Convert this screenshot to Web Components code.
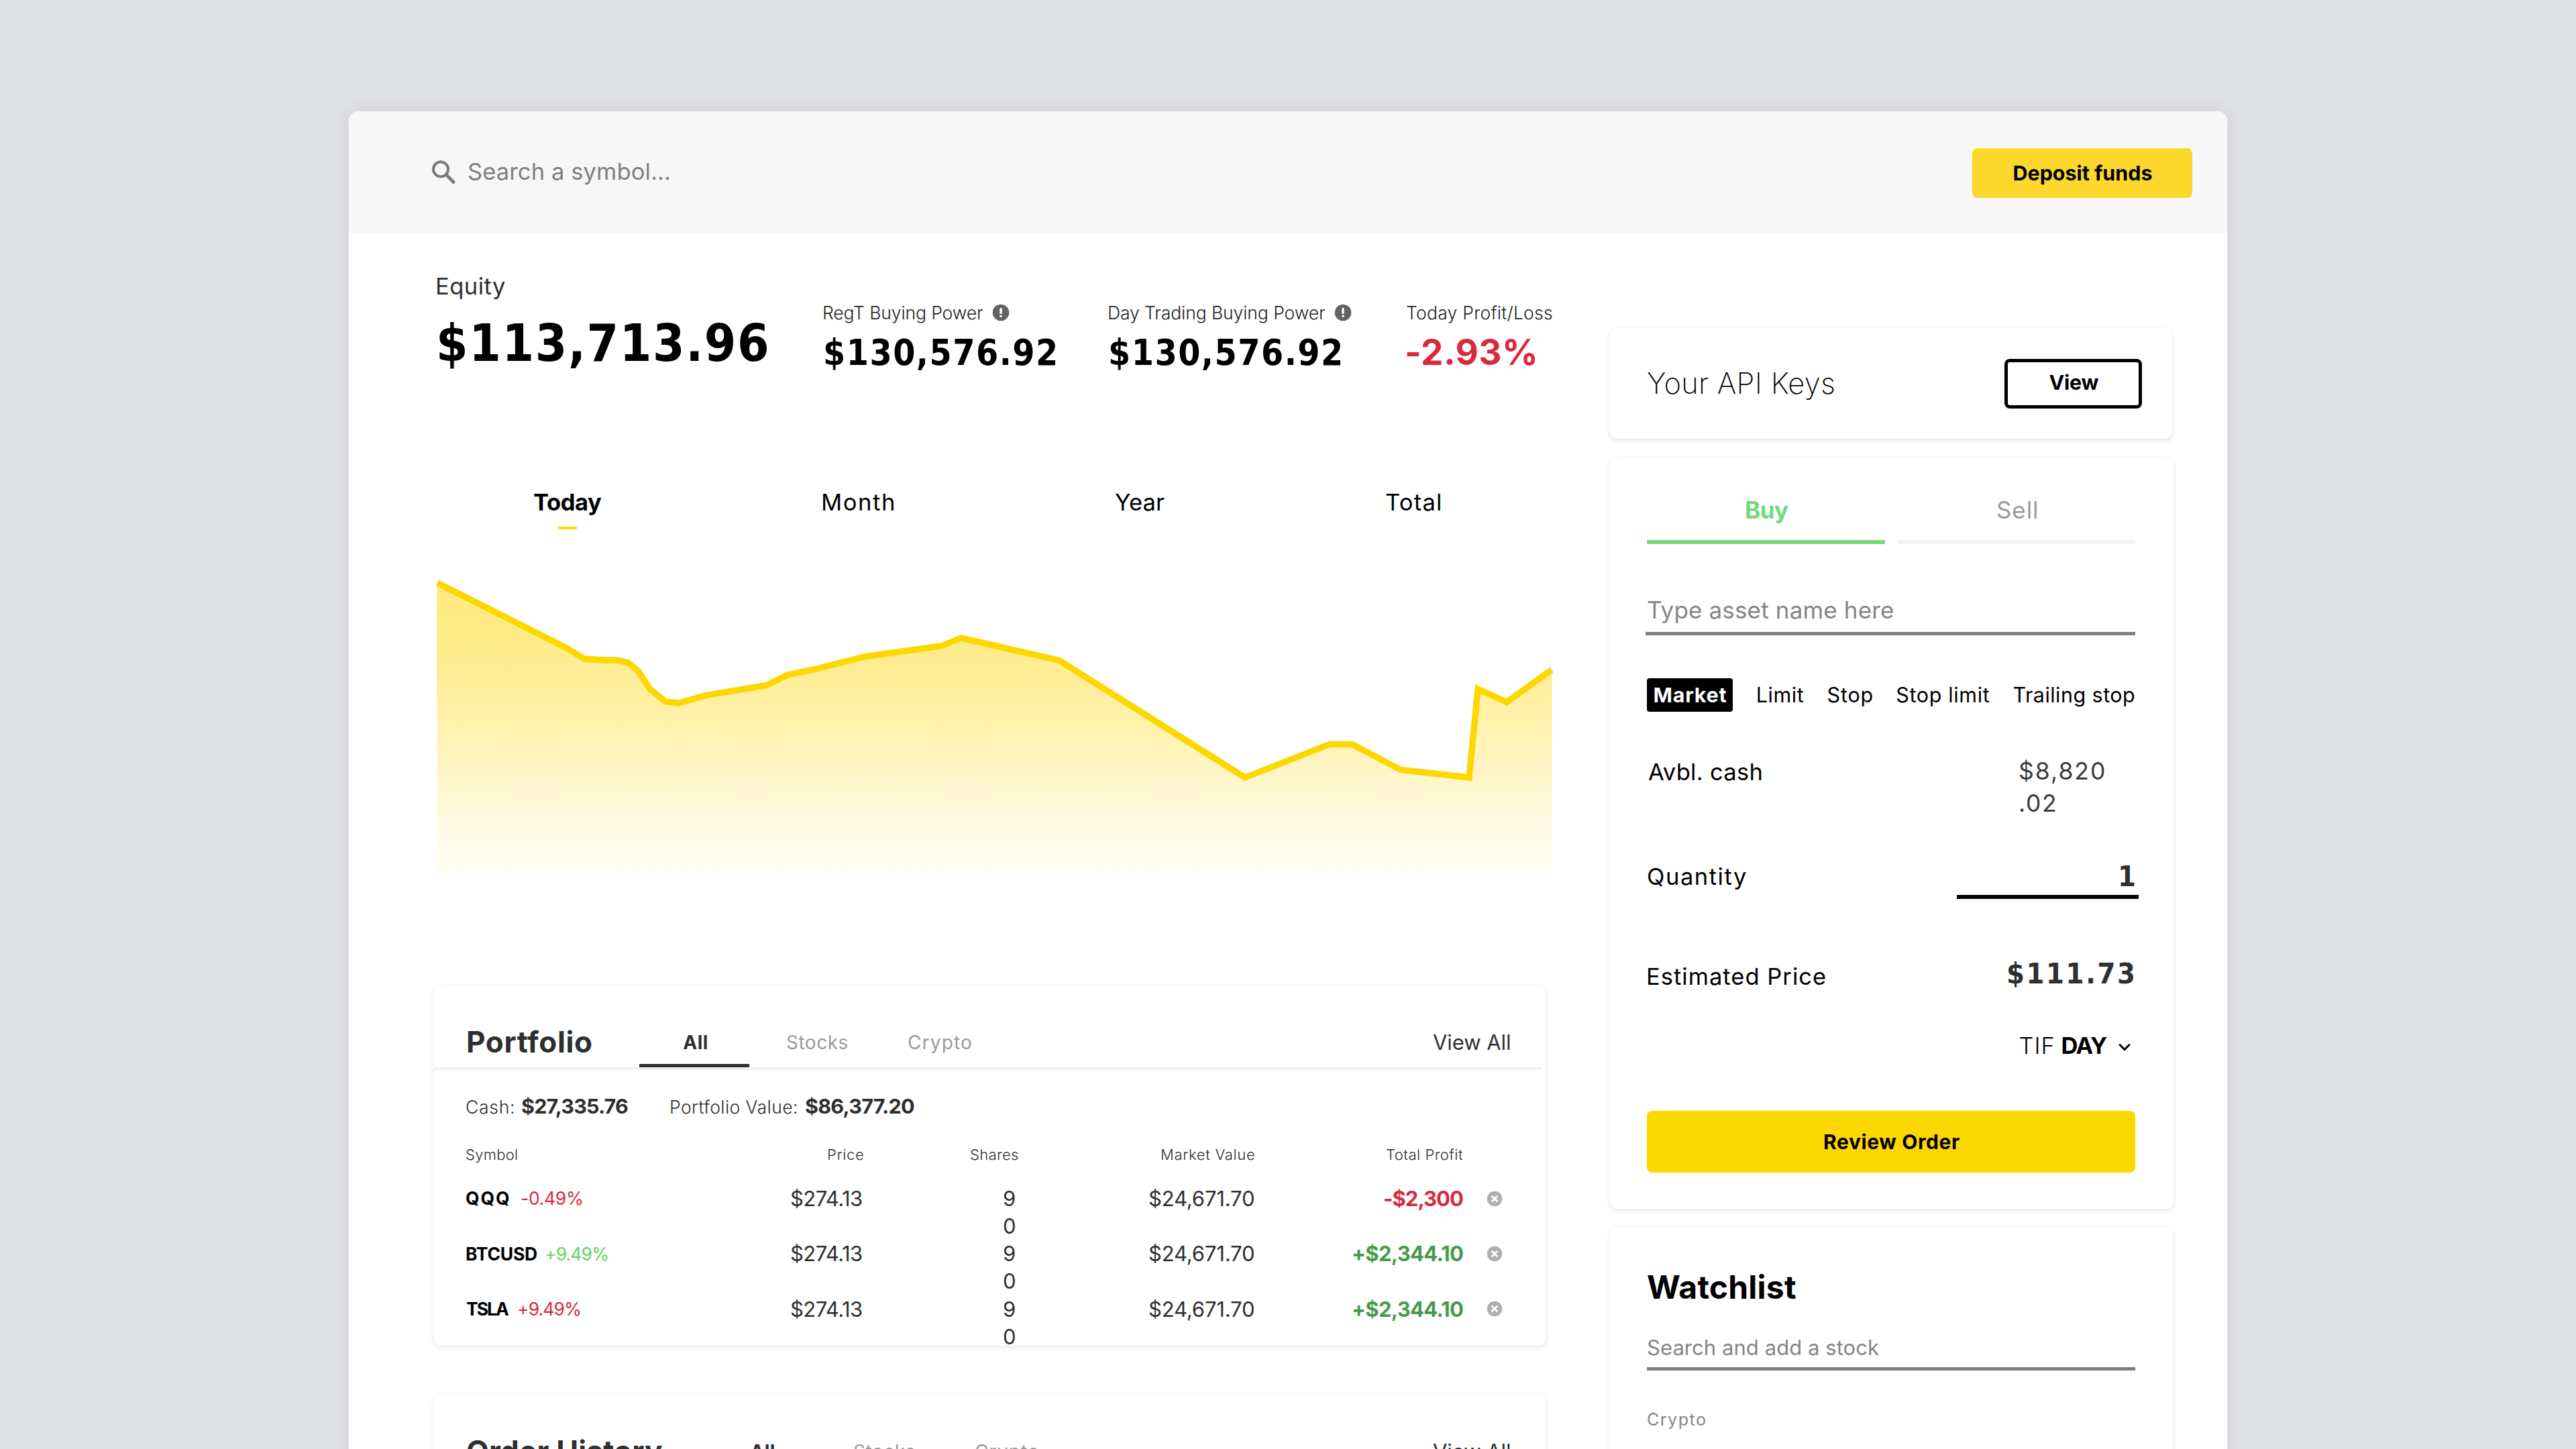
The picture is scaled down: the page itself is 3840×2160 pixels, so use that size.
<!DOCTYPE html>
<html lang="en">
<head>
<meta charset="utf-8">
<title>Dashboard</title>
<style>
  html, body {
    margin: 0;
    height: 2160px;
    overflow: hidden;
  }
  body {
    background: #e0e1e5;
    font-family: Inter, "Liberation Sans", sans-serif;
    color: #000;
  }
</style>
</head>
<body>
<trading-app></trading-app>

<script>
// Single line label. Tracking is adjusted so the glyphs fill the given width.
class UiText extends HTMLElement {
  connectedCallback() {
    if (this.shadowRoot) return;
    const size = this.getAttribute('size') || '30';
    const weight = this.getAttribute('weight') || '400';
    const color = this.getAttribute('color') || 'inherit';
    const width = parseFloat(this.getAttribute('width'));
    const family = this.hasAttribute('figures')
      ? '"DejaVu Sans Condensed", "DejaVu Sans", sans-serif'
      : 'Inter, "Liberation Sans", sans-serif';
    const text = this.textContent;

    const ctx = UiText.ctx;
    ctx.font = `${weight} ${size}px ${family}`;
    const m = ctx.measureText(text);
    const ink = m.actualBoundingBoxLeft + m.actualBoundingBoxRight;
    const spacing = text.length > 1 ? (width - ink) / (text.length - 1) : 0;

    this.attachShadow({ mode: 'open' });
    this.shadowRoot.innerHTML = `
      <style>
        :host {
          display: block;
          flex: none;
          width: ${width}px;
          height: ${size}px;
          color: ${color};
          font: ${weight} ${size}px/1 ${family};
          white-space: nowrap;
        }
        span {
          display: block;
          margin-left: ${m.actualBoundingBoxLeft + 1}px;
          margin-right: -20px;
          letter-spacing: ${spacing}px;
        }
      </style>
      <span><slot></slot></span>
    `;
  }
}
UiText.ctx = document.createElement('canvas').getContext('2d');

class UiIcon extends HTMLElement {
  connectedCallback() {
    const icons = {
      search: ['0 0 36 36', 36, `<circle cx="14" cy="13.3" r="11" fill="none" stroke="#7b7b7b" stroke-width="4"/>
        <path d="M22.5 21.8L33 32.5" stroke="#7b7b7b" stroke-width="4.8" stroke-linecap="round"/>`],
      info: ['0 0 26 26', 26, `<circle cx="13" cy="13" r="12.3" fill="#626262"/>
        <path d="M13 7.4v6" stroke="#fff" stroke-width="3.4" stroke-linecap="round"/>
        <circle cx="13" cy="18.2" r="1.8" fill="#fff"/>`],
      close: ['0 0 24 24', 24, `<circle cx="12" cy="12" r="11.3" fill="#aeb0ad"/>
        <path d="M8.4 8.4l7.2 7.2M15.6 8.4l-7.2 7.2" stroke="#fff" stroke-width="2.8" stroke-linecap="round"/>`],
      chevron: ['0 0 18 12', 18, `<path d="M2 2.5l7 7 7-7" fill="none" stroke="#000" stroke-width="3" stroke-linecap="round" stroke-linejoin="round"/>`]
    };
    const [box, width, shapes] = icons[this.getAttribute('name')];
    this.attachShadow({ mode: 'open' });
    this.shadowRoot.innerHTML = `
      <style>
        :host { display: block; flex: none; width: ${width}px; }
        svg { display: block; width: 100%; }
      </style>
      <svg viewBox="${box}">${shapes}</svg>
    `;
  }
}

class UiCard extends HTMLElement {
  connectedCallback() {
    this.attachShadow({ mode: 'open' });
    this.shadowRoot.innerHTML = `
      <style>
        :host {
          display: block;
          box-sizing: border-box;
          background: #fff;
          border-radius: 10px;
          box-shadow: 0 3px 7px rgba(40, 40, 60, 0.1), 0 0 3px rgba(40, 40, 60, 0.04);
        }
      </style>
      <slot></slot>
    `;
  }
}

class UiButton extends HTMLElement {
  connectedCallback() {
    this.attachShadow({ mode: 'open' });
    this.shadowRoot.innerHTML = `
      <style>
        :host {
          display: flex;
          flex: none;
          box-sizing: border-box;
          align-items: center;
          justify-content: center;
          background: #fdd700;
          border-radius: 8px;
        }
        :host([outline]) {
          background: #fff;
          border: 5px solid #000;
        }
      </style>
      <slot></slot>
    `;
  }
}

class TopBar extends HTMLElement {
  connectedCallback() {
    this.attachShadow({ mode: 'open' });
    this.shadowRoot.innerHTML = `
      <style>
        :host {
          display: flex;
          box-sizing: border-box;
          align-items: center;
          height: 181px;
          padding: 0 52px 0 123px;
          background: #f7f7f7;
        }
        ui-text { margin-left: 18px; }
        ui-button {
          width: 328px;
          height: 74px;
          margin: 3px 0 0 auto;
          background: #fcd82c;
        }
        ui-button ui-text { margin-left: 0; }
      </style>
      <ui-icon name="search"></ui-icon>
      <ui-text width="300" size="34.5" color="#7f7f7f">Search a symbol...</ui-text>
      <ui-button><ui-text width="205" size="30.5" weight="700">Deposit funds</ui-text></ui-button>
    `;
  }
}

class StatItem extends HTMLElement {
  connectedCallback() {
    this.attachShadow({ mode: 'open' });
    this.shadowRoot.innerHTML = `
      <style>
        :host { display: block; }
        .label, .value {
          display: flex;
          align-items: center;
          height: 40px;
          gap: 15px;
        }
        .value {
          height: 60px;
          margin-top: 9px;
          padding-left: var(--value-indent, 2px);
        }
        :host([main]) { margin-top: -39px; }
        :host([main]) .value { margin-top: 35px; }
      </style>
      <div class="label"><slot name="label"></slot></div>
      <div class="value"><slot></slot></div>
    `;
  }
}

class EquityStats extends HTMLElement {
  connectedCallback() {
    this.attachShadow({ mode: 'open' });
    this.shadowRoot.innerHTML = `
      <style>
        :host {
          display: grid;
          box-sizing: border-box;
          grid-template-columns: 576px 425px 444px 1fr;
          height: 250px;
          padding: 99px 0 0 4px;
        }
      </style>
      <stat-item main style="--value-indent: 3px">
        <ui-text slot="label" width="101" size="34.5" color="#2d2f30">Equity</ui-text>
        <ui-text width="488" size="76" weight="700" figures>$113,713.96</ui-text>
      </stat-item>
      <stat-item>
        <ui-text slot="label" width="237" size="26.5" weight="300" color="#222">RegT Buying Power</ui-text>
        <ui-icon slot="label" name="info"></ui-icon>
        <ui-text width="344" size="53" weight="700" figures>$130,576.92</ui-text>
      </stat-item>
      <stat-item>
        <ui-text slot="label" width="322" size="26.5" weight="300" color="#222">Day Trading Buying Power</ui-text>
        <ui-icon slot="label" name="info"></ui-icon>
        <ui-text width="344" size="53" weight="700" figures>$130,576.92</ui-text>
      </stat-item>
      <stat-item style="--value-indent: 0px">
        <ui-text slot="label" width="217" size="26.5" weight="300" color="#222">Today Profit/Loss</ui-text>
        <ui-text width="191" size="53" weight="700" color="#d8293f">-2.93%</ui-text>
      </stat-item>
    `;
  }
}

class RangeTabs extends HTMLElement {
  connectedCallback() {
    this.attachShadow({ mode: 'open' });
    this.shadowRoot.innerHTML = `
      <style>
        :host {
          display: flex;
          gap: 330px;
          height: 66px;
          margin: 126px 0 0 148px;
        }
        .tab {
          display: flex;
          flex-direction: column;
          align-items: center;
          padding-top: 9px;
        }
        .bar {
          width: 28px;
          height: 5px;
          margin-top: 18px;
          border-radius: 2px;
          background: #fdd700;
        }
      </style>
      <div class="tab">
        <ui-text width="101" size="34.5" weight="700">Today</ui-text>
        <div class="bar"></div>
      </div>
      <div class="tab"><ui-text width="105" size="34.5">Month</ui-text></div>
      <div class="tab"><ui-text width="74" size="34.5">Year</ui-text></div>
      <div class="tab"><ui-text width="81" size="34.5">Total</ui-text></div>
    `;
  }
}

class EquityChart extends HTMLElement {
  connectedCallback() {
    const points = [
      [652, 869], [843, 965], [858, 974], [871, 982], [899, 984], [920, 984], [937, 988],
      [952, 1001], [968, 1026], [992, 1046], [1012, 1048], [1052, 1036.5], [1143, 1021.5],
      [1174, 1006], [1215, 997.5], [1290, 978.5], [1403, 963], [1433, 951],
      [1579, 984.5], [1856, 1159], [1982, 1109.5], [2016, 1109.5], [2088, 1147.5],
      [2190, 1159], [2203, 1027], [2246, 1046.5], [2313, 998.5]
    ];
    const line = points.map(p => p.join(',')).join(' ');
    this.attachShadow({ mode: 'open' });
    this.shadowRoot.innerHTML = `
      <style>
        :host { display: block; height: 460px; margin-top: 61px; }
        svg { display: block; width: 1670px; height: 460px; }
      </style>
      <svg viewBox="647 850 1670 460">
        <defs>
          <linearGradient id="fade" x1="0" y1="869" x2="0" y2="1301" gradientUnits="userSpaceOnUse">
            <stop offset="0" stop-color="#ffe97c"/>
            <stop offset="0.2" stop-color="#ffeb88"/>
            <stop offset="0.46" stop-color="#fff1a9"/>
            <stop offset="0.65" stop-color="#fff5c6"/>
            <stop offset="0.85" stop-color="#fffbe6"/>
            <stop offset="1" stop-color="#fffef4"/>
          </linearGradient>
        </defs>
        <polygon points="651.5,1301 651.5,869 ${line} 2313.5,998 2313.5,1301" fill="url(#fade)"/>
        <polyline points="${line}" fill="none" stroke="#fdd700" stroke-width="9.4"/>
      </svg>
    `;
  }
}

// Card heading with title, filter tabs and the "View All" link
class HoldingsHeader extends HTMLElement {
  connectedCallback() {
    this.attachShadow({ mode: 'open' });
    this.shadowRoot.innerHTML = `
      <style>
        :host {
          display: flex;
          box-sizing: border-box;
          align-items: center;
          height: 127px;
          margin-right: 5px;
          padding: 47px 49px 0 49px;
          border-bottom: 4px solid #f1f1f1;
          color: #2d2f30;
        }
        .tab {
          display: flex;
          box-sizing: border-box;
          align-items: center;
          justify-content: center;
          width: 164px;
          height: 76px;
          margin: 0 55px 0 var(--tab-gap, 72px);
          padding-top: 6px;
          border-bottom: 5px solid #2d2f30;
        }
        .link { margin-left: auto; }
        .muted { margin-right: 90.5px; }
        .muted, .muted + ui-text { margin-top: 2px; }
      </style>
      <slot></slot>
      <div class="tab"><ui-text width="35.5" size="28" weight="700">All</ui-text></div>
      <ui-text class="muted" width="90.5" size="28" color="#9b9b9b">Stocks</ui-text>
      <ui-text width="94" size="28" color="#9b9b9b">Crypto</ui-text>
      <ui-text class="link" width="115" size="31">View All</ui-text>
    `;
  }
}

class PortfolioCard extends HTMLElement {
  connectedCallback() {
    const rows = [
      { symbol: 'QQQ', w: 64, gap: 18, change: '-0.49%', cw: 91, cc: '#d8293f', profit: '-$2,300', pw: 117, pc: '#d8293f' },
      { symbol: 'BTCUSD', w: 105, gap: 14, change: '+9.49%', cw: 92, cc: '#66d167', profit: '+$2,344.10', pw: 164, pc: '#479a49' },
      { symbol: 'TSLA', w: 64, gap: 14, change: '+9.49%', cw: 92, cc: '#d8293f', profit: '+$2,344.10', pw: 164, pc: '#479a49' }
    ];
    this.attachShadow({ mode: 'open' });
    this.shadowRoot.innerHTML = `
      <style>
        :host { display: block; margin-top: 158px; }
        ui-card { height: 538px; color: #2d2f30; }
        .summary {
          display: flex;
          align-items: center;
          height: 60px;
          margin-top: 25px;
          padding-left: 47px;
        }
        .row {
          display: grid;
          grid-template-columns: 592px 231px 352px 311px 60px;
          align-items: start;
          justify-items: end;
          height: 82.3px;
          margin-left: 47px;
        }
        .row.head { height: 40px; margin-top: 20px; margin-bottom: 26px; }
        .cell {
          display: flex;
          align-items: center;
          height: 41px;
        }
        .symbol { width: 100%; }
        .symbol .price { margin-left: auto; margin-right: 2px; }
        .shares {
          width: 22px;
          font-size: 31px;
          line-height: 41px;
          word-break: break-all;
        }
      </style>
      <ui-card>
        <holdings-header>
          <ui-text width="185" size="44" weight="700">Portfolio</ui-text>
        </holdings-header>
        <div class="summary">
          <ui-text width="71" size="26.5" weight="300" style="margin-top: 1px">Cash:</ui-text>
          <ui-text width="158" size="30.5" weight="700" style="margin: -1px 0 0 12px">$27,335.76</ui-text>
          <ui-text width="188" size="26.5" weight="300" style="margin: 1px 0 0 64px">Portfolio Value:</ui-text>
          <ui-text width="162" size="30.5" weight="700" style="margin: -1px 0 0 13px">$86,377.20</ui-text>
        </div>
        <div class="row head">
          <div class="cell symbol">
            <ui-text width="76" size="22" weight="300">Symbol</ui-text>
            <ui-text class="price" style="margin-right: 0" width="52" size="22" weight="300">Price</ui-text>
          </div>
          <div class="cell"><ui-text width="71" size="22" weight="300">Shares</ui-text></div>
          <div class="cell"><ui-text width="138" size="22" weight="300">Market Value</ui-text></div>
          <div class="cell"><ui-text width="114" size="22" weight="300">Total Profit</ui-text></div>
        </div>
        ${rows.map(r => `
          <div class="row">
            <div class="cell symbol">
              <ui-text width="${r.w}" size="26.5" weight="700" color="#000">${r.symbol}</ui-text>
              <ui-text width="${r.cw}" size="26.5" color="${r.cc}" style="margin-left: ${r.gap}px">${r.change}</ui-text>
              <ui-text class="price" width="106" size="31">$274.13</ui-text>
            </div>
            <div class="shares">90</div>
            <div class="cell"><ui-text width="156" size="31" style="margin-right: 1px">$24,671.70</ui-text></div>
            <div class="cell"><ui-text width="${r.pw}" size="31" weight="700" color="${r.pc}">${r.profit}</ui-text></div>
            <div class="cell"><ui-icon name="close"></ui-icon></div>
          </div>
        `).join('')}
      </ui-card>
    `;
  }
}

class OrderHistory extends HTMLElement {
  connectedCallback() {
    this.attachShadow({ mode: 'open' });
    this.shadowRoot.innerHTML = `
      <style>
        :host { display: block; margin-top: 72px; --tab-gap: 67px; }
        ui-card { height: 538px; color: #2d2f30; }
      </style>
      <ui-card>
        <holdings-header>
          <ui-text width="290" size="44" weight="700">Order History</ui-text>
        </holdings-header>
      </ui-card>
    `;
  }
}

class ApiKeys extends HTMLElement {
  connectedCallback() {
    this.attachShadow({ mode: 'open' });
    this.shadowRoot.innerHTML = `
      <style>
        :host { display: block; width: 838px; }
        .row {
          display: flex;
          align-items: center;
          justify-content: space-between;
          height: 165px;
          padding: 0 45px 0 55px;
        }
        ui-button { width: 205px; height: 74px; padding-bottom: 3px; }
      </style>
      <ui-card>
        <div class="row">
          <ui-text width="278" size="43.5" weight="250">Your API Keys</ui-text>
          <ui-button outline><ui-text width="74" size="30.5" weight="700">View</ui-text></ui-button>
        </div>
      </ui-card>
    `;
  }
}

class OrderTicket extends HTMLElement {
  connectedCallback() {
    this.attachShadow({ mode: 'open' });
    this.shadowRoot.innerHTML = `
      <style>
        :host { display: block; }
        ui-card { height: 1121px; padding: 0 57px 0 55px; }
        .sides {
          display: grid;
          grid-template-columns: 1fr 1fr;
          gap: 18px;
          padding-top: 54px;
        }
        .side {
          display: flex;
          box-sizing: border-box;
          justify-content: center;
          height: 76px;
          padding-top: 8px;
          border-bottom: 6px solid #f2f3f5;
        }
        .side.buy { border-color: #72da7a; }
        .asset {
          display: flex;
          align-items: center;
          height: 58px;
          margin: 73px 0 0 -2px;
          padding: 0 0 0 2px;
          border-bottom: 5px solid #808080;
        }
        .types {
          display: flex;
          align-items: center;
          justify-content: space-between;
          height: 50px;
          margin: 64px 2px 0 0;
        }
        .active {
          display: flex;
          align-items: center;
          justify-content: center;
          width: 128px;
          height: 50px;
          border-radius: 4px;
          background: #000;
        }
        .field {
          display: flex;
          justify-content: space-between;
          padding-left: 1px;
        }
        .cash { height: 96px; margin-top: 65px; padding-top: 8px; }
        .cash .amount { display: grid; grid-auto-rows: 48px; width: 173px; }
        .quantity { height: 59px; margin: 51px -5px 0 0; }
        .input {
          display: flex;
          box-sizing: border-box;
          align-items: center;
          justify-content: flex-end;
          width: 271px;
          padding-right: 6px;
          border-bottom: 6px solid #000;
        }
        .price { align-items: center; height: 50px; margin: 91px 4px 0 0; }
        .price ui-text + ui-text { margin-bottom: 10px; }
        .tif {
          align-items: center;
          justify-content: flex-end;
          height: 50px;
          margin: 53px 7px 0 0;
        }
        ui-button { height: 92px; margin-top: 72px; }
      </style>
      <ui-card>
        <div class="sides">
          <div class="side buy"><ui-text width="63" size="35" weight="700" color="#72da7a" style="margin-left: 2px">Buy</ui-text></div>
          <div class="side"><ui-text width="59" size="35" color="#999">Sell</ui-text></div>
        </div>
        <div class="asset"><ui-text width="366" size="35" color="#858585" style="margin-bottom: 7px">Type asset name here</ui-text></div>
        <div class="types">
          <div class="active"><ui-text width="107" size="30.5" weight="700" color="#fff">Market</ui-text></div>
          <ui-text width="69" size="30.5">Limit</ui-text>
          <ui-text width="67" size="30.5">Stop</ui-text>
          <ui-text width="138.5" size="30.5">Stop limit</ui-text>
          <ui-text width="180.5" size="30.5">Trailing stop</ui-text>
        </div>
        <div class="field cash">
          <ui-text width="168.5" size="34.5">Avbl. cash</ui-text>
          <div class="amount">
            <ui-text width="126" size="35.5" color="#3a3b3c" style="margin-top: -2px">$8,820</ui-text>
            <ui-text width="53" size="35.5" color="#3a3b3c" style="margin-top: -2px">.02</ui-text>
          </div>
        </div>
        <div class="field quantity">
          <ui-text width="146" size="34.5" style="margin-top: 9px">Quantity</ui-text>
          <div class="input"><ui-text width="22" size="43" weight="700" color="#2d2f30" figures style="margin-bottom: 2px">1</ui-text></div>
        </div>
        <div class="field price">
          <ui-text width="264" size="34.5">Estimated Price</ui-text>
          <ui-text width="186" size="43" weight="700" color="#2d2f30" figures>$111.73</ui-text>
        </div>
        <div class="field tif">
          <ui-text width="50" size="34.5" weight="300">TIF</ui-text>
          <ui-text width="66.5" size="34.5" weight="700" style="margin: 0 18px 0 14px">DAY</ui-text>
          <ui-icon name="chevron" style="margin-top: 4px"></ui-icon>
        </div>
        <ui-button><ui-text width="202" size="30" weight="700">Review Order</ui-text></ui-button>
      </ui-card>
    `;
  }
}

class WatchList extends HTMLElement {
  connectedCallback() {
    this.attachShadow({ mode: 'open' });
    this.shadowRoot.innerHTML = `
      <style>
        :host { display: block; width: 839px; }
        ui-card { height: 620px; padding: 66px 56px 0 55px; }
        .search {
          margin-top: 50px;
          padding-bottom: 14px;
          border-bottom: 5px solid #808080;
        }
        .group { margin-top: 61px; }
      </style>
      <ui-card>
        <ui-text width="221" size="48" weight="700">Watchlist</ui-text>
        <div class="search"><ui-text width="345" size="31" color="#858585">Search and add a stock</ui-text></div>
        <ui-text class="group" width="86" size="25" color="#858585">Crypto</ui-text>
      </ui-card>
    `;
  }
}

class TradingApp extends HTMLElement {
  connectedCallback() {
    this.attachShadow({ mode: 'open' });
    this.shadowRoot.innerHTML = `
      <style>
        :host {
          display: block;
          box-sizing: border-box;
          height: 2160px;
          padding: 166px 520px 0;
          overflow: hidden;
        }
        .window {
          height: 2100px;
          overflow: hidden;
          border-radius: 14px;
          background: #fff;
        }
        .shadow {
          border-radius: 14px;
          box-shadow: 0 0 28px rgba(60, 60, 70, 0.1);
        }
        .content {
          display: grid;
          grid-template-columns: 1657px 840px;
          gap: 96px;
          padding-left: 127px;
        }
        .side {
          display: flex;
          flex-direction: column;
          gap: 27px;
          padding-top: 142px;
        }
      </style>
      <div class="shadow">
        <div class="window">
          <top-bar></top-bar>
          <div class="content">
            <div>
              <equity-stats></equity-stats>
              <range-tabs></range-tabs>
              <equity-chart></equity-chart>
              <portfolio-card></portfolio-card>
              <order-history></order-history>
            </div>
            <div class="side">
              <api-keys></api-keys>
              <order-ticket></order-ticket>
              <watch-list></watch-list>
            </div>
          </div>
        </div>
      </div>
    `;
  }
}

customElements.define('ui-text', UiText);
customElements.define('ui-icon', UiIcon);
customElements.define('ui-card', UiCard);
customElements.define('ui-button', UiButton);
customElements.define('top-bar', TopBar);
customElements.define('stat-item', StatItem);
customElements.define('equity-stats', EquityStats);
customElements.define('range-tabs', RangeTabs);
customElements.define('equity-chart', EquityChart);
customElements.define('holdings-header', HoldingsHeader);
customElements.define('portfolio-card', PortfolioCard);
customElements.define('order-history', OrderHistory);
customElements.define('api-keys', ApiKeys);
customElements.define('order-ticket', OrderTicket);
customElements.define('watch-list', WatchList);
customElements.define('trading-app', TradingApp);
</script>
</body>
</html>
